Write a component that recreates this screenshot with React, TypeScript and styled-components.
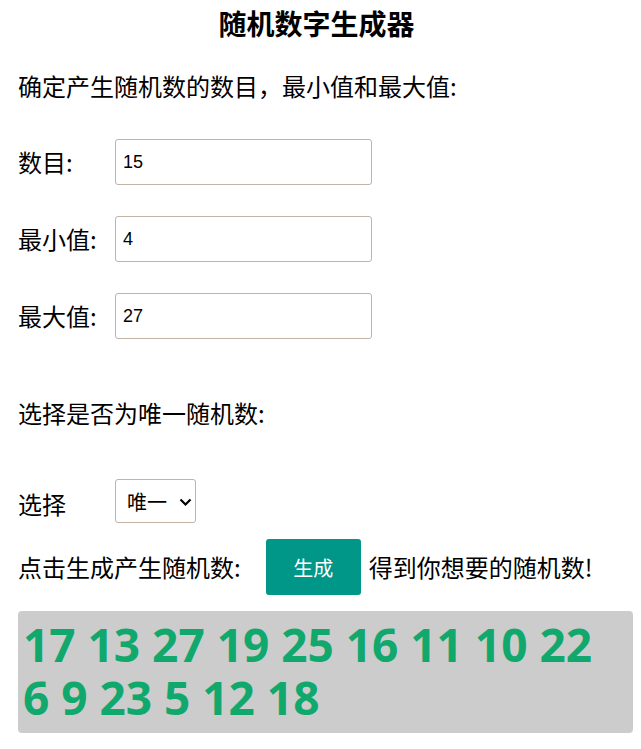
import React, { useState } from 'react';
import styled, { createGlobalStyle } from 'styled-components';

const GlobalStyle = createGlobalStyle`
  body {
    margin: 0;
    background: #fff;
    color: #000;
    font-family: "Noto Sans CJK SC", "Liberation Sans", sans-serif;
  }
`;

const Page = styled.main`
  padding: 6px 8px 16px 18px;
`;

const Title = styled.h1`
  margin: 0 0 0 -18px;
  font-size: 28px;
  line-height: 34px;
  font-weight: 700;
  text-align: center;
`;

const Text = styled.p<{ $top: number }>`
  margin: ${(p) => p.$top}px 0 0;
  font-size: 24px;
  line-height: 32px;
  white-space: nowrap;
`;

const Row = styled.div<{ $top: number }>`
  display: flex;
  align-items: center;
  margin-top: ${(p) => p.$top}px;
`;

const Label = styled.label<{ $shift?: number }>`
  width: 97px;
  flex: none;
  font-size: 24px;
  line-height: 32px;
  position: relative;
  top: ${(p) => p.$shift ?? 0}px;
`;

const Field = styled.input`
  box-sizing: border-box;
  width: 257px;
  height: 46px;
  margin: 0;
  padding: 0 7px;
  border: 1px solid #c2b3a4;
  border-radius: 3px;
  font-family: "Liberation Sans", Arial, sans-serif;
  font-size: 18px;
  color: #000;
  outline: none;
`;

const SelectWrap = styled.div`
  position: relative;
  width: 81px;
  height: 44px;
`;

const Select = styled.select`
  box-sizing: border-box;
  width: 100%;
  height: 100%;
  margin: 0;
  padding: 0 0 0 11px;
  border: 1px solid #c2b3a4;
  border-radius: 3px;
  background: #fff;
  appearance: none;
  font-family: "Noto Sans CJK SC", sans-serif;
  font-size: 20px;
  color: #000;
  outline: none;
`;

const Chevron = styled.svg`
  position: absolute;
  right: 4px;
  top: 18px;
  width: 13px;
  height: 10px;
  pointer-events: none;
`;

const GenerateButton = styled.button`
  width: 95px;
  height: 56px;
  margin: 0 8px 0 25px;
  border: none;
  border-radius: 3px;
  background: #009688;
  color: #fff;
  font-family: "Noto Sans CJK SC", sans-serif;
  font-size: 20px;
  cursor: pointer;
`;

const ResultBox = styled.div`
  margin-top: 16px;
  padding: 7px 16px 9px 5px;
  background: #cccccc;
  border-radius: 4px;
  color: #11a86d;
  font-family: "Open Sans", "Noto Sans", sans-serif;
  font-weight: 700;
  font-size: 46px;
  line-height: 53px;
`;

const initial = [17, 13, 27, 19, 25, 16, 11, 10, 22, 6, 9, 23, 5, 12, 18];

const App = () => {
  const [count, setCount] = useState('15');
  const [min, setMin] = useState('4');
  const [max, setMax] = useState('27');
  const [unique, setUnique] = useState('unique');
  const [numbers, setNumbers] = useState<number[]>(initial);

  const generate = () => {
    const n = parseInt(count, 10) || 0;
    const lo = parseInt(min, 10) || 0;
    const hi = parseInt(max, 10) || 0;
    const out: number[] = [];
    const span = hi - lo + 1;
    const limit = unique === 'unique' ? Math.min(n, span) : n;
    while (out.length < limit) {
      const v = lo + Math.floor(Math.random() * span);
      if (unique === 'unique' && out.includes(v)) continue;
      out.push(v);
    }
    setNumbers(out);
  };

  return (
    <>
      <GlobalStyle />
      <Page>
        <Title>随机数字生成器</Title>
        <Text $top={30}>确定产生随机数的数目，最小值和最大值:</Text>
        <Row $top={37}>
          <Label>数目:</Label>
          <Field value={count} onChange={(e) => setCount(e.target.value)} />
        </Row>
        <Row $top={31}>
          <Label>最小值:</Label>
          <Field value={min} onChange={(e) => setMin(e.target.value)} />
        </Row>
        <Row $top={31}>
          <Label>最大值:</Label>
          <Field value={max} onChange={(e) => setMax(e.target.value)} />
        </Row>
        <Text $top={58}>选择是否为唯一随机数:</Text>
        <Row $top={50}>
          <Label $shift={3}>选择</Label>
          <SelectWrap>
            <Select value={unique} onChange={(e) => setUnique(e.target.value)}>
              <option value="unique">唯一</option>
              <option value="repeat">可重复</option>
            </Select>
            <Chevron viewBox="0 0 13 10" aria-hidden="true">
              <path d="M1.5 2.5 L6.5 7.5 L11.5 2.5" fill="none" stroke="#000" strokeWidth="2.2" />
            </Chevron>
          </SelectWrap>
        </Row>
        <Row $top={16}>
          <Text $top={0}>点击生成产生随机数:</Text>
          <GenerateButton onClick={generate}>生成</GenerateButton>
          <Text $top={0}>得到你想要的随机数!</Text>
        </Row>
        <ResultBox>{numbers.join(' ')}</ResultBox>
      </Page>
    </>
  );
};

export default App;
